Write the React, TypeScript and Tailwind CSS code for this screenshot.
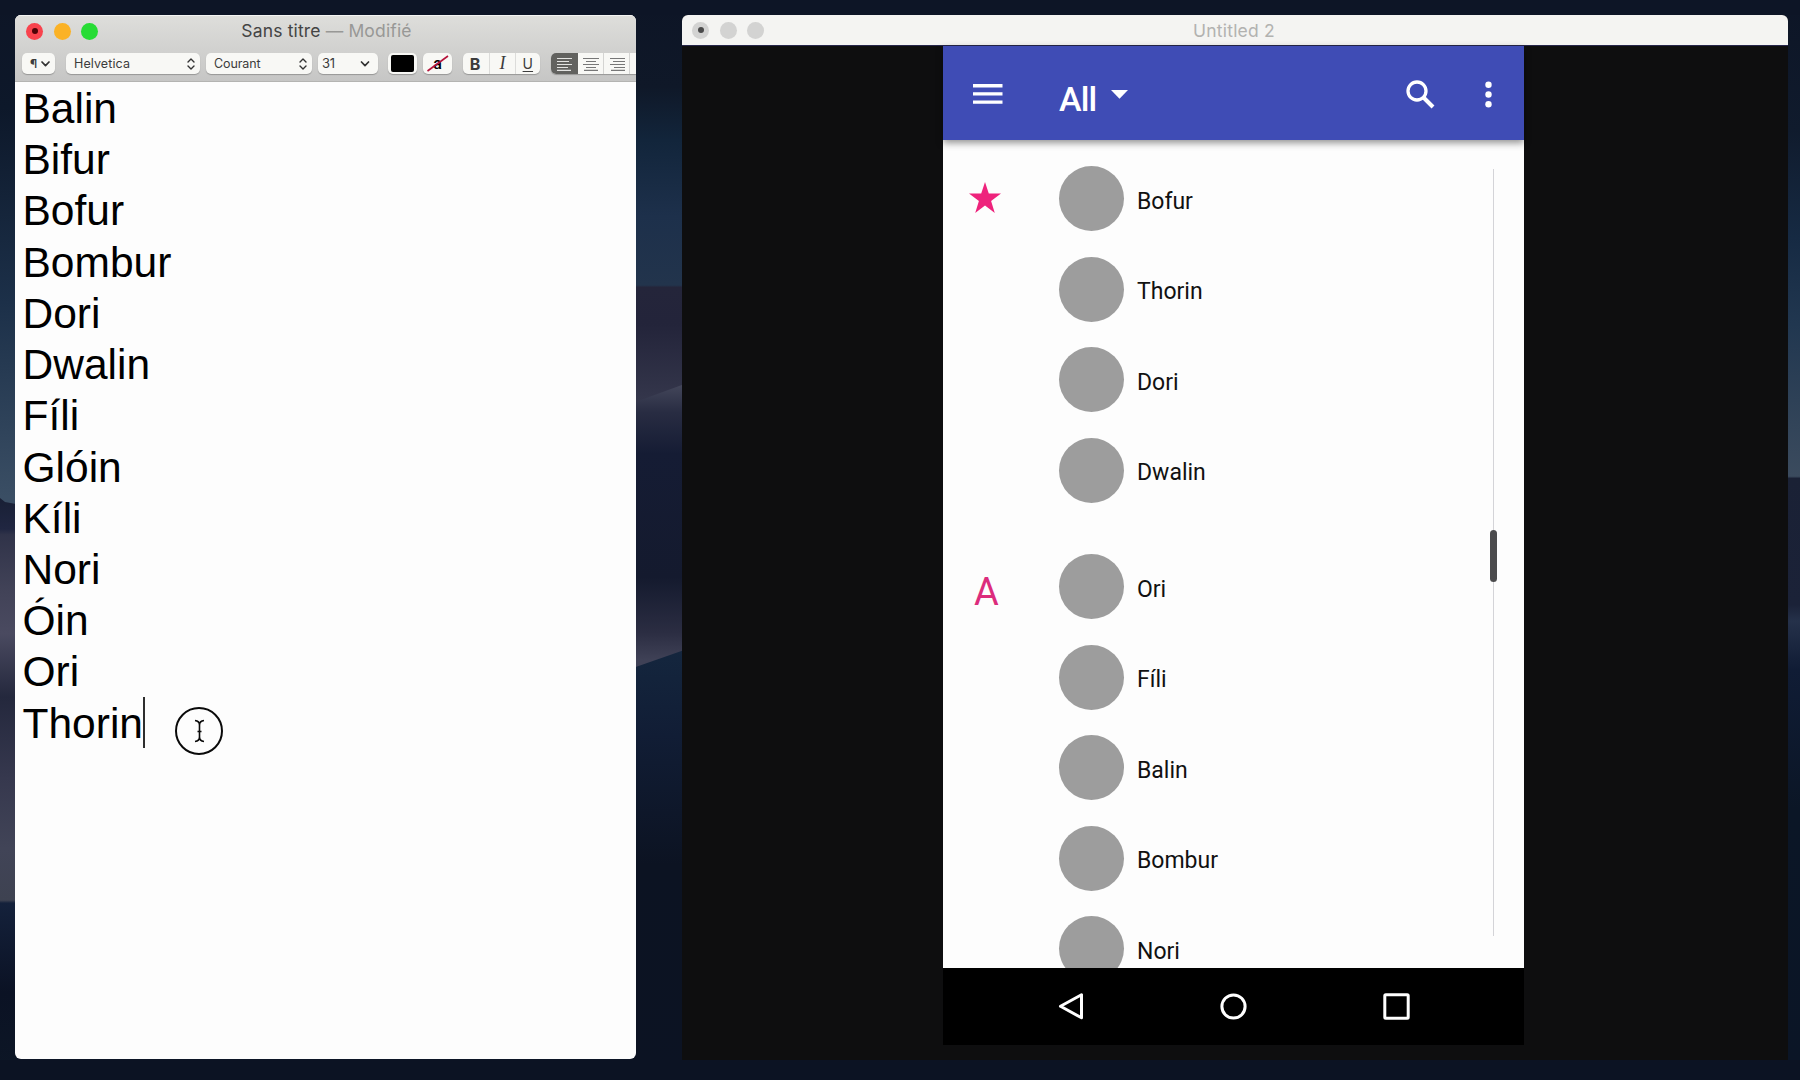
import type { ReactNode } from "react";

const names = [
  "Balin", "Bifur", "Bofur", "Bombur", "Dori", "Dwalin", "Fíli",
  "Glóin", "Kíli", "Nori", "Óin", "Ori", "Thorin",
];
const starred = ["Bofur", "Thorin", "Dori", "Dwalin"];
const others = ["Ori", "Fíli", "Balin", "Bombur", "Nori"];

function Wallpaper() {
  return (
    <svg className="absolute inset-0" width="1800" height="1080" viewBox="0 0 1800 1080">
      <defs>
        <linearGradient id="wl" x1="0" y1="0" x2="0" y2="1080" gradientUnits="userSpaceOnUse">
          <stop offset="0" stopColor="#0d1526" />
          <stop offset=".1" stopColor="#0d182a" />
          <stop offset=".28" stopColor="#1c3049" />
          <stop offset=".46" stopColor="#3a4e64" />
        </linearGradient>
        <linearGradient id="wl2" x1="0" y1="500" x2="0" y2="1080" gradientUnits="userSpaceOnUse">
          <stop offset="0" stopColor="#192036" />
          <stop offset=".05" stopColor="#202641" />
          <stop offset=".06" stopColor="#303349" />
          <stop offset=".16" stopColor="#424358" />
          <stop offset=".23" stopColor="#4a4a60" />
          <stop offset=".34" stopColor="#24283d" />
          <stop offset=".48" stopColor="#36384e" />
          <stop offset=".6" stopColor="#414457" />
          <stop offset=".69" stopColor="#3e4251" />
          <stop offset=".695" stopColor="#14213b" />
          <stop offset=".85" stopColor="#0b1224" />
          <stop offset="1" stopColor="#0d1726" />
        </linearGradient>
        <linearGradient id="wm" x1="0" y1="0" x2="0" y2="1080" gradientUnits="userSpaceOnUse">
          <stop offset="0" stopColor="#0d1526" />
          <stop offset=".08" stopColor="#0f1828" />
          <stop offset=".13" stopColor="#12253b" />
          <stop offset=".2" stopColor="#1d304b" />
          <stop offset=".264" stopColor="#22344c" />
          <stop offset=".266" stopColor="#24253a" />
          <stop offset=".3" stopColor="#23243a" />
          <stop offset=".37" stopColor="#34364b" />
        </linearGradient>
        <linearGradient id="wm2" x1="0" y1="385" x2="0" y2="660" gradientUnits="userSpaceOnUse">
          <stop offset="0" stopColor="#43465a" />
          <stop offset=".1" stopColor="#282c42" />
          <stop offset=".25" stopColor="#151c34" />
          <stop offset=".7" stopColor="#141a2e" />
          <stop offset=".9" stopColor="#2b2d42" />
          <stop offset="1" stopColor="#3f4156" />
        </linearGradient>
        <linearGradient id="wm3" x1="0" y1="650" x2="0" y2="1080" gradientUnits="userSpaceOnUse">
          <stop offset="0" stopColor="#14263e" />
          <stop offset=".2" stopColor="#111d35" />
          <stop offset=".5" stopColor="#0c1322" />
          <stop offset="1" stopColor="#0c1323" />
        </linearGradient>
        <linearGradient id="wr" x1="0" y1="0" x2="0" y2="1080" gradientUnits="userSpaceOnUse">
          <stop offset="0" stopColor="#0d1526" />
          <stop offset=".12" stopColor="#101b2d" />
          <stop offset=".22" stopColor="#162a43" />
          <stop offset=".3" stopColor="#213750" />
          <stop offset=".441" stopColor="#3b4b5e" />
          <stop offset=".443" stopColor="#1a2135" />
          <stop offset=".56" stopColor="#1b2238" />
          <stop offset=".575" stopColor="#25314a" />
          <stop offset=".62" stopColor="#101c35" />
          <stop offset=".75" stopColor="#0b1626" />
          <stop offset="1" stopColor="#0b1526" />
        </linearGradient>
      </defs>
      <rect width="1800" height="1080" fill="#0d1526" />
      <rect width="16" height="1080" fill="url(#wl)" />
      <path d="M0 498L5 502L16 504V1080H0z" fill="url(#wl2)" />
      <rect x="630" width="60" height="1080" fill="url(#wm)" />
      <path d="M630 404L690 382V1080H630z" fill="url(#wm2)" />
      <path d="M630 669L690 648V1080H630z" fill="url(#wm3)" />
      <rect x="1780" width="20" height="1080" fill="url(#wr)" />
      <rect y="1060" width="1800" height="20" fill="#0c1323" />
      <rect width="1800" height="15" fill="#0d1526" />
    </svg>
  );
}

function Tool({ className = "", children }: { className?: string; children?: ReactNode }) {
  return (
    <div className={`flex h-[21px] shrink-0 items-center rounded-[5px] bg-[#f8f8f5] text-[13px] text-[#3c3c3c] shadow-[0_1px_1px_rgba(0,0,0,0.25)] ${className}`}>
      {children}
    </div>
  );
}

function UpDown() {
  return (
    <svg width="8" height="12" viewBox="0 0 8 12" fill="none" stroke="#333" strokeWidth="1.4" strokeLinecap="round" strokeLinejoin="round">
      <path d="M1 4L4 1L7 4M1 8L4 11L7 8" />
    </svg>
  );
}

function Down({ size = 9 }: { size?: number }) {
  return (
    <svg width={size} height="6" viewBox="0 0 9 6" fill="none" stroke="#333" strokeWidth="1.7" strokeLinecap="round" strokeLinejoin="round">
      <path d="M1 1L4.500 4.700L8 1" />
    </svg>
  );
}

function AlignLines({ d, color }: { d: string; color: string }) {
  return (
    <svg width="16" height="14" viewBox="0 0 16 14" stroke={color} strokeWidth="1.2">
      <path d={d} />
    </svg>
  );
}

function Editor() {
  return (
    <section className="absolute left-[15px] top-[15px] flex h-[1044px] w-[621px] flex-col overflow-hidden rounded-[6px] bg-[#fdfdfd] font-['Inter']">
      <header className="h-[67px] shrink-0 border-b border-[#b4b4b2] bg-gradient-to-b from-[#dededb] to-[#c6c6c5] shadow-[inset_0_1px_0_#f4f4f2]">
        <div className="relative flex h-[32px] items-center justify-center">
          <div className="absolute left-[11px] flex gap-[10.500px]">
            <span className="flex size-[17px] items-center justify-center rounded-full bg-[#f8434d]">
              <span className="size-[6px] rounded-full bg-[#4d0307]" />
            </span>
            <span className="size-[17px] rounded-full bg-[#fbb225]" />
            <span className="size-[17px] rounded-full bg-[#27dc35]" />
          </div>
          <h1 className="whitespace-pre pl-[2px] pt-[1px] text-[17.500px] tracking-[0.15px] text-[#444]">
            Sans titre <span className="text-[#989896]">— Modifié</span>
          </h1>
        </div>
        <div className="flex pl-[7px] pt-[6px]">
          <Tool className="w-[33px] justify-between pl-[8px] pr-[5px]">
            <span className="text-[12px] font-semibold">¶</span>
            <Down />
          </Tool>
          <Tool className="ml-[11px] w-[134px] justify-between pl-[8px] pr-[5px]">
            <span className="pt-[1px] text-[12.500px] tracking-[0.1px]">Helvetica</span>
            <UpDown />
          </Tool>
          <Tool className="ml-[6px] w-[106px] justify-between pl-[8px] pr-[5px]">
            <span className="pt-[1px] text-[12.500px] tracking-[-0.1px]">Courant</span>
            <UpDown />
          </Tool>
          <Tool className="ml-[6px] w-[60px] justify-between pl-[4px] pr-[8px]">
            <span className="pt-[1px] tracking-[-0.3px]">31</span>
            <Down size={10} />
          </Tool>
          <Tool className="ml-[10px] w-[29px] justify-center">
            <span className="h-[17px] w-[23px] rounded-[2px] bg-black" />
          </Tool>
          <Tool className="relative ml-[6px] w-[29px] justify-center">
            <span className="font-['Roboto'] text-[16px] font-medium leading-none text-black">a</span>
            <svg className="absolute left-[4px] top-[2px]" width="22" height="17" viewBox="0 0 22 17" stroke="#b5123a" strokeWidth="1.6">
              <path d="M0.500 16L21 1" />
            </svg>
          </Tool>
          <Tool className="ml-[11px] w-[77px] divide-x divide-[#dcdcda]">
            <span className="flex h-full flex-1 items-center justify-center pr-[2px] text-[16px] font-bold">B</span>
            <span className="flex h-full flex-1 items-center justify-center font-['Liberation_Serif'] text-[18px] italic">I</span>
            <span className="flex h-full flex-1 items-center justify-center text-[14px] underline underline-offset-2">U</span>
          </Tool>
          <Tool className="ml-[11px] w-[105px] overflow-hidden">
            <span className="flex h-full w-[27px] items-center justify-center bg-[#62625f]">
              <AlignLines color="#e4e4e2" d="M0 1.500H15M0 4.500H12M0 7.500H15M0 10.500H11M0 13.300H14" />
            </span>
            <span className="flex h-full w-[26px] items-center justify-center border-r border-[#d4d4d2]">
              <AlignLines color="#777" d="M0 1.500H16M3 4.500H13M0 7.500H16M3 10.500H13M1 13.300H15" />
            </span>
            <span className="flex h-full w-[26px] items-center justify-center border-r border-[#d4d4d2]">
              <AlignLines color="#777" d="M1 1.500H16M4 4.500H16M1 7.500H16M5 10.500H16M2 13.300H16" />
            </span>
          </Tool>
        </div>
      </header>
      <div className="relative pl-[7.500px] pt-px font-['Liberation_Sans'] text-[42.500px] leading-[51.220px] text-black">
        {names.map((name) => (
          <p key={name} className="h-[51.220px]">
            {name === "Thorin" ? (
              <span className="relative">
                {name}
                <span className="absolute -right-[2px] bottom-[-1px] h-[51px] w-[2px] bg-[#2e2e2e]" />
              </span>
            ) : (
              name
            )}
          </p>
        ))}
      </div>
    </section>
  );
}

function Contact({ name }: { name: string }) {
  return (
    <li className="flex h-[90.500px] items-center gap-[13px]">
      <span className="size-[65px] shrink-0 rounded-full bg-[#9d9d9d]" />
      <span className="pt-[5px] text-[23px] leading-none text-[#111]">{name}</span>
    </li>
  );
}

function Phone() {
  return (
    <div className="flex h-[999px] w-[581px] flex-col bg-[#fdfdfd] font-['Roboto']">
      <header className="relative z-10 flex h-[94px] shrink-0 items-center bg-[#3f4cb5] pt-[2px] text-white shadow-[0_3px_7px_rgba(0,0,0,0.42)]">
        <svg className="ml-[30px]" width="30" height="20" viewBox="0 0 30 20" fill="#fff">
          <path d="M0 0h29.500v3.400H0zM0 8.200h29.500v3.400H0zM0 16.400h29.500v3.400H0z" />
        </svg>
        <span className="ml-[56px] pt-[10px] text-[34px] font-medium leading-none tracking-[-0.800px]">All</span>
        <svg className="ml-[15px]" width="17" height="9" viewBox="0 0 17 9" fill="#fff">
          <path d="M0 0h17L8.500 8.800z" />
        </svg>
        <svg className="ml-auto" width="29" height="29" viewBox="0 0 29 29" fill="none" stroke="#fff">
          <circle cx="11" cy="11" r="9" strokeWidth="3.300" />
          <path d="M17.500 17.500L27 27" strokeWidth="4" />
        </svg>
        <svg className="ml-[50px] mr-[32px]" width="7" height="27" viewBox="0 0 7 27" fill="#fff">
          <circle cx="3.500" cy="3.700" r="3.200" />
          <circle cx="3.500" cy="13.500" r="3.200" />
          <circle cx="3.500" cy="23.200" r="3.200" />
        </svg>
      </header>
      <main className="relative min-h-0 flex-1 overflow-hidden">
        <section className="flex pt-[13.500px]">
          <div className="w-[116px] shrink-0 pl-[26px] pt-[28px]">
            <svg width="32" height="31" viewBox="0 0 32 31" fill="#ee237c">
              <path d="M16 0L19.800 11.600H32L22.100 18.900L25.800 31L16 23.600L6.200 31L9.900 18.900L0 11.600H12.200z" />
            </svg>
          </div>
          <ul>{starred.map((n) => <Contact key={n} name={n} />)}</ul>
        </section>
        <section className="flex pt-[26px]">
          <div className="w-[116px] shrink-0 pl-[31px] pt-[31px] text-[38px] leading-none text-[#dc2c7c]">A</div>
          <ul>{others.map((n) => <Contact key={n} name={n} />)}</ul>
        </section>
        <div className="absolute right-[30px] top-[29px] h-[767px] w-px bg-[#d4d4d8]" />
        <div className="absolute right-[27px] top-[390px] h-[52px] w-[7px] rounded-full bg-[#4b4b4d]" />
      </main>
      <nav className="flex h-[77px] shrink-0 items-center bg-black">
        <svg className="ml-[115px]" width="27" height="29" viewBox="0 0 27 29" fill="none" stroke="#fff" strokeWidth="3" strokeLinejoin="round">
          <path d="M2.500 14.300L23.500 2.800V25.800z" />
        </svg>
        <svg className="ml-[135px]" width="27" height="27" viewBox="0 0 27 27" fill="none" stroke="#fff" strokeWidth="3">
          <circle cx="13.500" cy="13.500" r="11.600" />
        </svg>
        <svg className="ml-[136px]" width="27" height="27" viewBox="0 0 27 27" fill="none" stroke="#fff" strokeWidth="3">
          <rect x="1.800" y="1.800" width="23.400" height="23.400" rx="1" />
        </svg>
      </nav>
    </div>
  );
}

function Mirror() {
  return (
    <section className="absolute left-[682px] top-[15px] flex h-[1045px] w-[1106px] flex-col overflow-hidden rounded-t-[6px] bg-[#0e0e0f] font-['Inter']">
      <header className="relative flex h-[31px] shrink-0 items-center justify-center border-b border-[#26264a] bg-[#f4f4f2]">
        <div className="absolute left-[10px] flex gap-[10.500px]">
          <span className="flex size-[17px] items-center justify-center rounded-full bg-[#d3d3d2]">
            <span className="size-[6px] rounded-full bg-[#4a4a4a]" />
          </span>
          <span className="size-[17px] rounded-full bg-[#d3d3d2]" />
          <span className="size-[17px] rounded-full bg-[#d3d3d2]" />
        </div>
        <h2 className="pr-[2px] pt-[2px] text-[17.500px] tracking-[0.2px] text-[#b2b2b0]">Untitled 2</h2>
      </header>
      <div className="flex justify-center pr-[3px]">
        <Phone />
      </div>
    </section>
  );
}

function Pointer() {
  return (
    <svg className="absolute left-[174px] top-[706px]" width="50" height="50" viewBox="0 0 50 50" fill="none" stroke="#0a0a0a">
      <circle cx="25" cy="25" r="23" strokeWidth="2" />
      <path d="M21 14.500Q25.500 15 25.500 19V31Q25.500 35 21 35.500M30 14.500Q25.500 15 25.500 19M25.500 31Q25.500 35 30 35.500M23.500 25.500H27.500" strokeWidth="1.600" />
    </svg>
  );
}

export default function App() {
  return (
    <div className="relative h-[1080px] w-[1800px] overflow-hidden bg-[#0d1526]">
      <Wallpaper />
      <Editor />
      <Mirror />
      <Pointer />
    </div>
  );
}
